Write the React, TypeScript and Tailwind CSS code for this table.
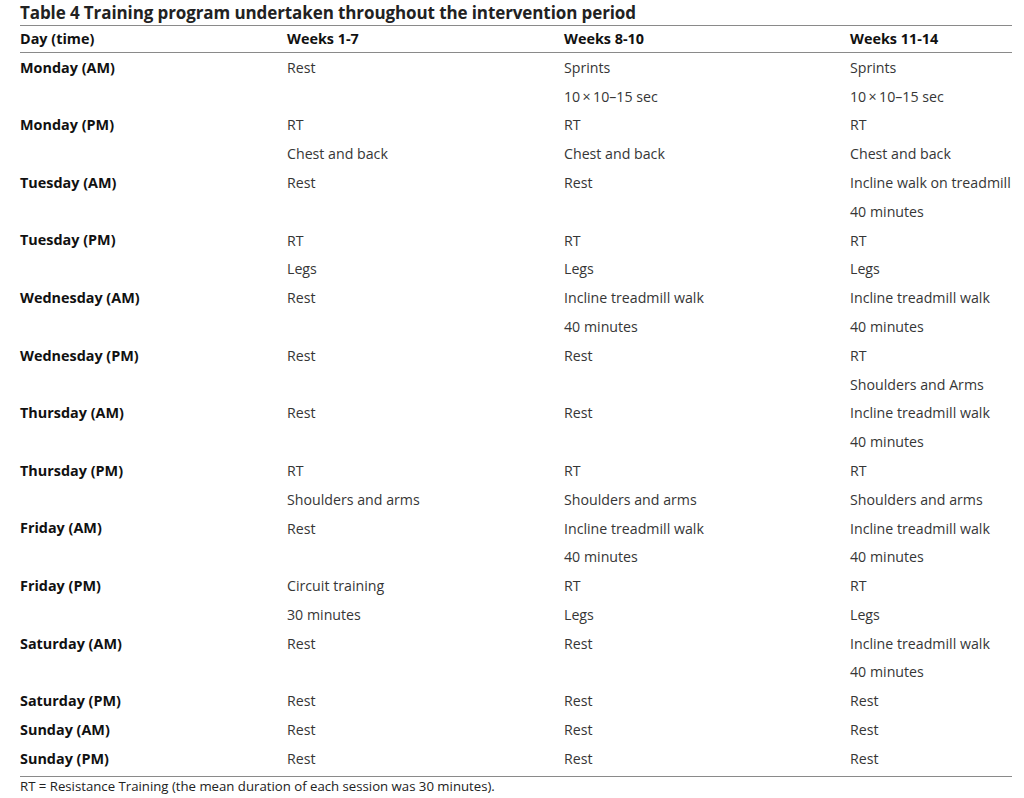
const rows: { day: string; cells: string[][] }[] = [
  { day: 'Monday (AM)', cells: [['Rest'], ['Sprints', '10\u2009×\u200910–15 sec'], ['Sprints', '10\u2009×\u200910–15 sec']] },
  { day: 'Monday (PM)', cells: [['RT', 'Chest and back'], ['RT', 'Chest and back'], ['RT', 'Chest and back']] },
  { day: 'Tuesday (AM)', cells: [['Rest'], ['Rest'], ['Incline walk on treadmill', '40 minutes']] },
  { day: 'Tuesday (PM)', cells: [['RT', 'Legs'], ['RT', 'Legs'], ['RT', 'Legs']] },
  { day: 'Wednesday (AM)', cells: [['Rest'], ['Incline treadmill walk', '40 minutes'], ['Incline treadmill walk', '40 minutes']] },
  { day: 'Wednesday (PM)', cells: [['Rest'], ['Rest'], ['RT', 'Shoulders and Arms']] },
  { day: 'Thursday (AM)', cells: [['Rest'], ['Rest'], ['Incline treadmill walk', '40 minutes']] },
  { day: 'Thursday (PM)', cells: [['RT', 'Shoulders and arms'], ['RT', 'Shoulders and arms'], ['RT', 'Shoulders and arms']] },
  { day: 'Friday (AM)', cells: [['Rest'], ['Incline treadmill walk', '40 minutes'], ['Incline treadmill walk', '40 minutes']] },
  { day: 'Friday (PM)', cells: [['Circuit training', '30 minutes'], ['RT', 'Legs'], ['RT', 'Legs']] },
  { day: 'Saturday (AM)', cells: [['Rest'], ['Rest'], ['Incline treadmill walk', '40 minutes']] },
  { day: 'Saturday (PM)', cells: [['Rest'], ['Rest'], ['Rest']] },
  { day: 'Sunday (AM)', cells: [['Rest'], ['Rest'], ['Rest']] },
  { day: 'Sunday (PM)', cells: [['Rest'], ['Rest'], ['Rest']] },
]

const cols = 'grid grid-cols-[267px_277px_286px_1fr]'

export default function App() {
  return (
    <div className="h-[798px] w-[1024px] bg-white pl-[20px] pr-[12px] font-['Open_Sans',sans-serif] text-[#363636]">
      <h1 className="flex h-[26px] items-center whitespace-nowrap border-b border-[#8a8a8a] text-[17px] font-bold tracking-[-0.1px] text-[#222]">
        Table 4 Training program undertaken throughout the intervention period
      </h1>
      <div className={`${cols} h-[27px] items-center border-b border-[#8a8a8a] text-[14.4px] font-bold text-[#111]`}>
        <div>Day (time)</div>
        <div>Weeks 1-7</div>
        <div>Weeks 8-10</div>
        <div>Weeks 11-14</div>
      </div>
      <div className="border-b border-[#8a8a8a] pb-[3px] text-[14.2px]">
        {rows.map((r) => (
          <div key={r.day} className={cols}>
            <div className="flex h-[28.8px] items-center text-[14.4px] font-bold text-[#111]">{r.day}</div>
            {r.cells.map((lines, i) => (
              <div key={i}>
                {lines.map((l, j) => (
                  <div key={j} className="flex h-[28.8px] items-center whitespace-nowrap">
                    {l}
                  </div>
                ))}
              </div>
            ))}
          </div>
        ))}
      </div>
      <p className="whitespace-nowrap pt-[1px] text-[13.2px] leading-[17px] text-[#222]">
        RT = Resistance Training (the mean duration of each session was 30 minutes).
      </p>
    </div>
  )
}
